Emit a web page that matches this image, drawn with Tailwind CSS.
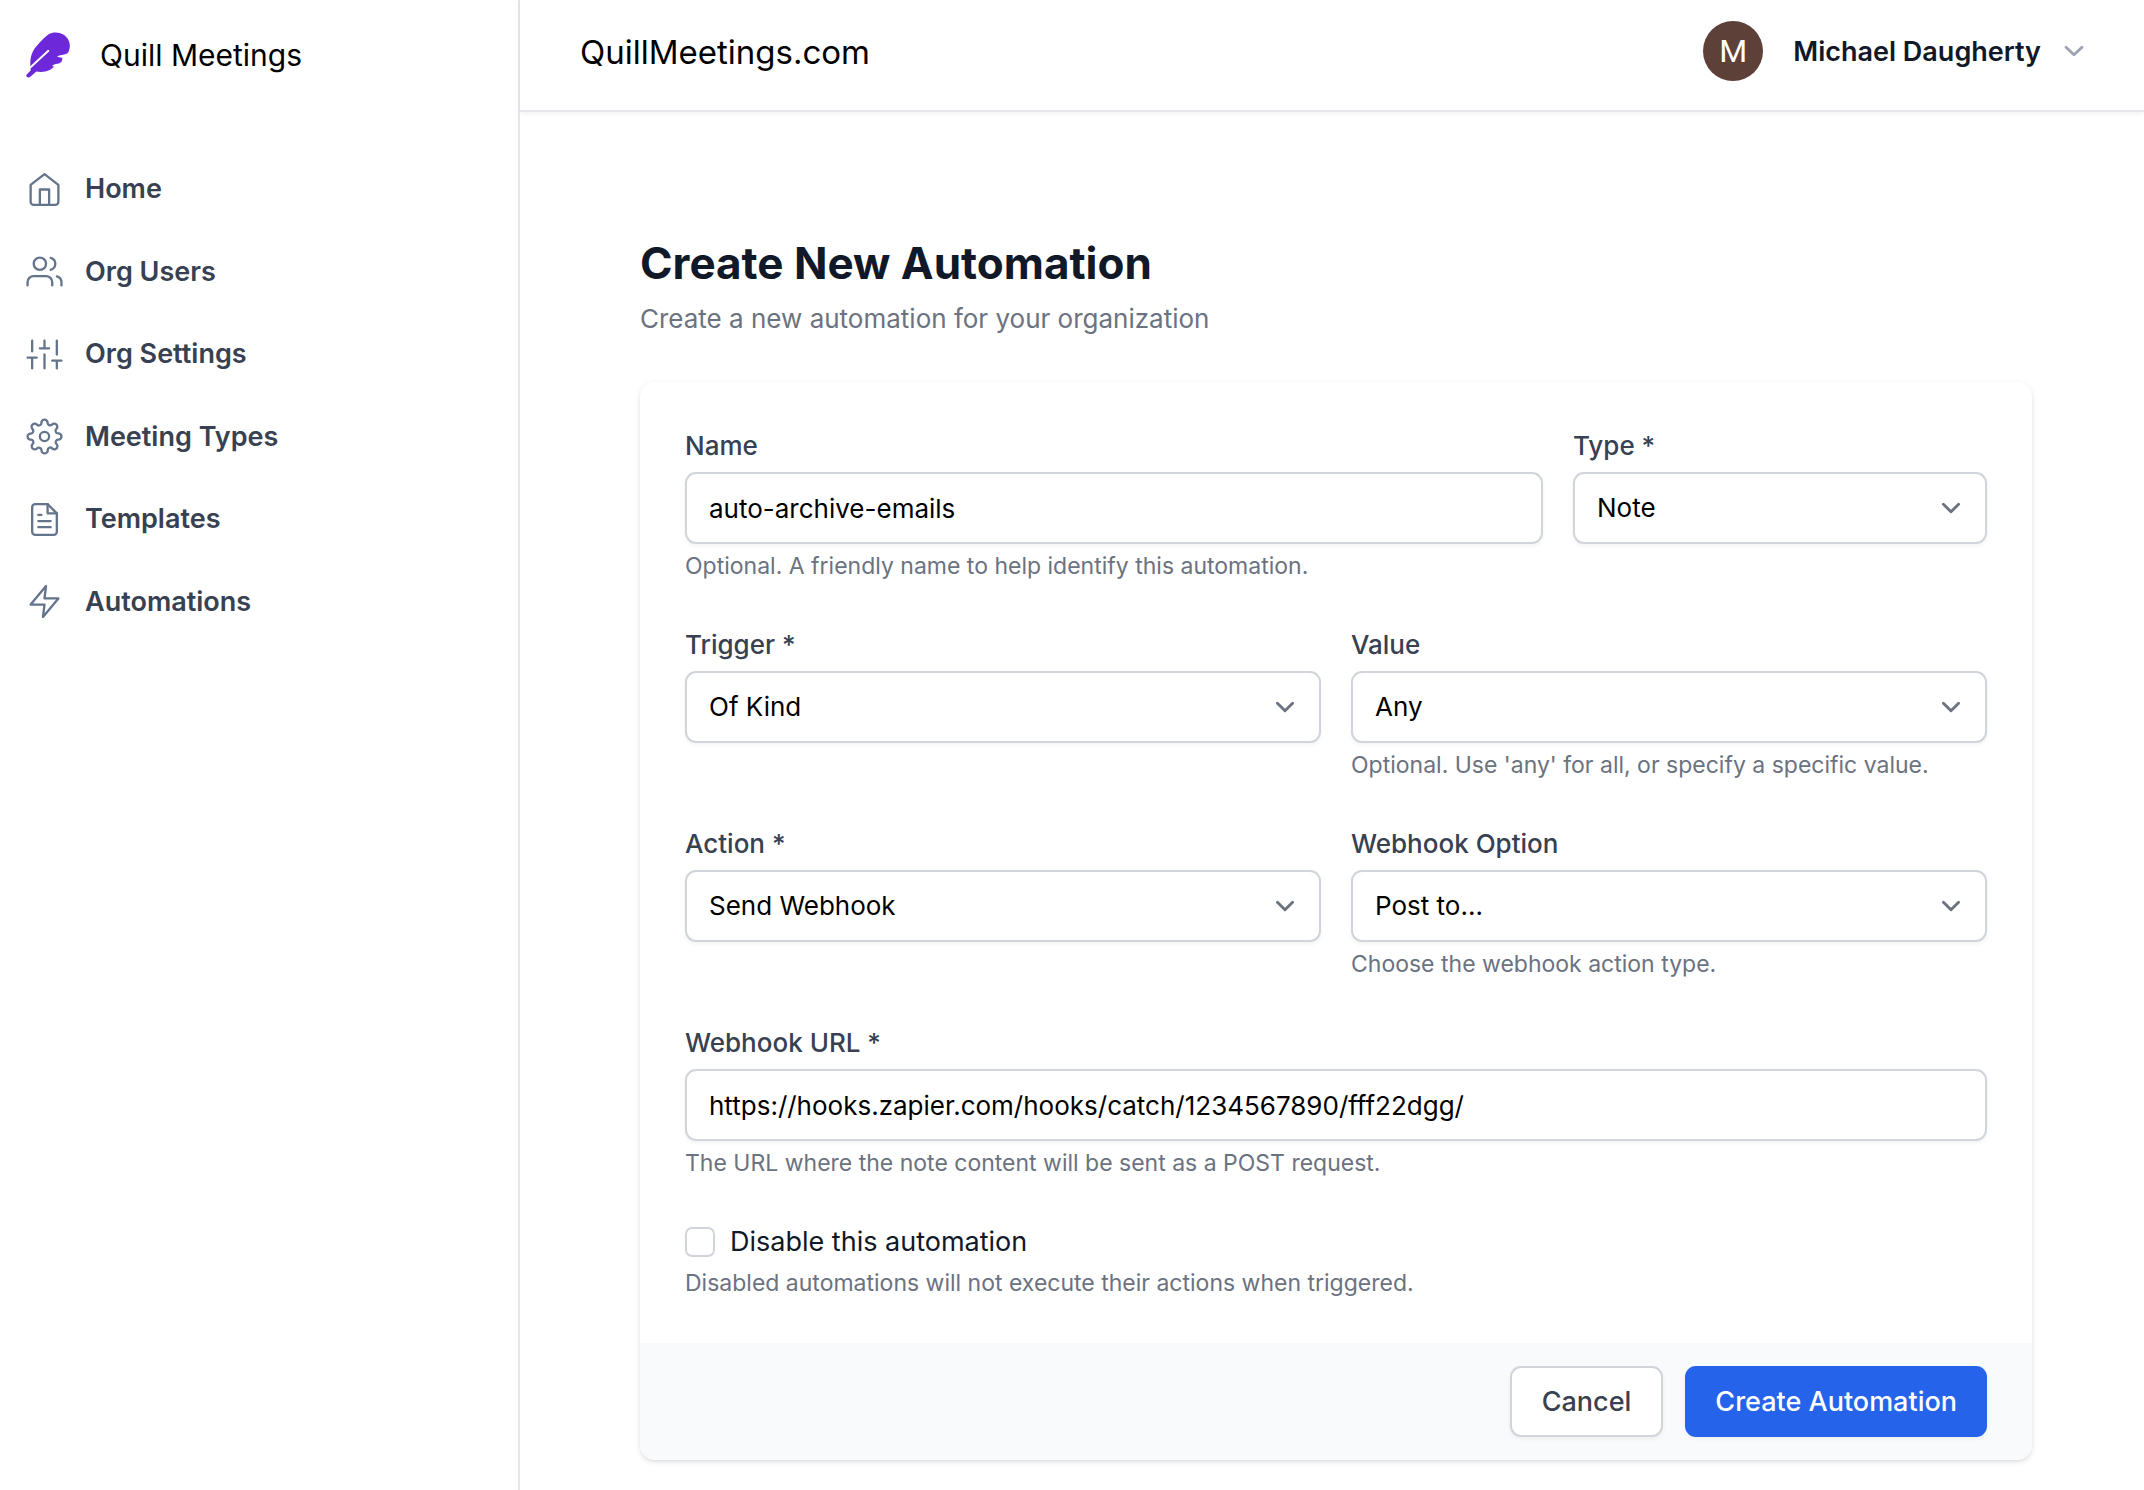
<!DOCTYPE html>
<html lang="en">
<head>
<meta charset="utf-8">
<meta name="viewport" content="width=device-width, initial-scale=1">
<title>Create New Automation - Quill Meetings</title>
<script src="https://cdn.jsdelivr.net/npm/@tailwindcss/browser@4"></script>
</head>
<body class="flex min-h-screen bg-white font-['Inter',sans-serif] text-[26px] leading-[38px] text-black">

<aside class="w-[520px] shrink-0 border-r-2 border-[#e5e7eb]">
  <a href="#" class="flex h-[110px] items-center gap-[30px] pl-[26px] text-[30px]">
    <svg class="h-[46px] w-[44px]" viewBox="48 35 132 137" aria-hidden="true">
      <path fill="#6d28d9" d="M61 134C60 110 66 91 82 74C95 60 106 47 116 41C128 34 148 34 160 42C176 52 184 71 177 90C175 96 173 99 169 100C160 103 150 104 141 107Q145 111 156 112Q158 114 156 120C154 126 150 128 146 129Q138 130 127 134Q128 137 132 139C126 146 116 151 106 153C95 155 86 154 79 153L61 169C54 175 46 168 50 162L62 150Z"/>
      <path stroke="#fff" stroke-width="6" stroke-linecap="round" fill="none" d="M57 142L62 140L115 91"/>
    </svg>
    <span>Quill Meetings</span>
  </a>
  <nav class="mt-[38px] grid h-[495px] auto-rows-fr text-[27px] font-semibold text-[#374151]">
    <a href="#" class="flex items-center gap-[22px] pl-[26px]">
      <svg class="size-[37px] text-[#64748b]" viewBox="0 0 24 24" fill="none" stroke="currentColor" stroke-width="1.5" stroke-linecap="round" stroke-linejoin="round" aria-hidden="true"><path d="M3 9l9-7 9 7v11a2 2 0 0 1-2 2H5a2 2 0 0 1-2-2z"/><path d="M9 22V12h6v10"/></svg>
      Home
    </a>
    <a href="#" class="flex items-center gap-[22px] pl-[26px]">
      <svg class="size-[37px] text-[#64748b]" viewBox="0 0 24 24" fill="none" stroke="currentColor" stroke-width="1.5" stroke-linecap="round" stroke-linejoin="round" aria-hidden="true"><path d="M17 21v-2a4 4 0 0 0-4-4H5a4 4 0 0 0-4 4v2"/><circle cx="9" cy="7" r="4"/><path d="M23 21v-2a4 4 0 0 0-3-3.87"/><path d="M16 3.13a4 4 0 0 1 0 7.75"/></svg>
      Org Users
    </a>
    <a href="#" class="flex items-center gap-[22px] pl-[26px]">
      <svg class="size-[37px] text-[#64748b]" viewBox="0 0 24 24" fill="none" stroke="currentColor" stroke-width="1.5" stroke-linecap="round" stroke-linejoin="round" aria-hidden="true"><path d="M4 21v-7M4 10V3M12 21v-9M12 8V3M20 21v-5M20 12V3M1 14h6M9 8h6M17 16h6"/></svg>
      Org Settings
    </a>
    <a href="#" class="flex items-center gap-[22px] pl-[26px]">
      <svg class="size-[37px] text-[#64748b]" viewBox="0 0 24 24" fill="none" stroke="currentColor" stroke-width="1.5" stroke-linecap="round" stroke-linejoin="round" aria-hidden="true"><circle cx="12" cy="12" r="3"/><path d="M19.4 15a1.65 1.65 0 0 0 .33 1.82l.06.06a2 2 0 0 1 0 2.83 2 2 0 0 1-2.83 0l-.06-.06a1.65 1.65 0 0 0-1.82-.33 1.65 1.65 0 0 0-1 1.51V21a2 2 0 0 1-2 2 2 2 0 0 1-2-2v-.09A1.65 1.65 0 0 0 9 19.4a1.65 1.65 0 0 0-1.82.33l-.06.06a2 2 0 0 1-2.83 0 2 2 0 0 1 0-2.83l.06-.06a1.65 1.65 0 0 0 .33-1.82 1.65 1.65 0 0 0-1.51-1H3a2 2 0 0 1-2-2 2 2 0 0 1 2-2h.09A1.65 1.65 0 0 0 4.6 9a1.65 1.65 0 0 0-.33-1.82l-.06-.06a2 2 0 0 1 0-2.83 2 2 0 0 1 2.83 0l.06.06a1.65 1.65 0 0 0 1.82.33H9a1.65 1.65 0 0 0 1-1.51V3a2 2 0 0 1 2-2 2 2 0 0 1 2 2v.09a1.65 1.65 0 0 0 1 1.51 1.65 1.65 0 0 0 1.82-.33l.06-.06a2 2 0 0 1 2.83 0 2 2 0 0 1 0 2.83l-.06.06a1.65 1.65 0 0 0-.33 1.82V9a1.65 1.65 0 0 0 1.51 1H21a2 2 0 0 1 2 2 2 2 0 0 1-2 2h-.09a1.65 1.65 0 0 0-1.51 1z"/></svg>
      Meeting Types
    </a>
    <a href="#" class="flex items-center gap-[22px] pl-[26px]">
      <svg class="size-[37px] text-[#64748b]" viewBox="0 0 24 24" fill="none" stroke="currentColor" stroke-width="1.5" stroke-linecap="round" stroke-linejoin="round" aria-hidden="true"><path d="M14 2H6a2 2 0 0 0-2 2v16a2 2 0 0 0 2 2h12a2 2 0 0 0 2-2V8z"/><path d="M14 2v6h6M16 13H8M16 17H8M10 9H8"/></svg>
      Templates
    </a>
    <a href="#" class="flex items-center gap-[22px] pl-[26px]">
      <svg class="size-[37px] text-[#64748b]" viewBox="0 0 24 24" fill="none" stroke="currentColor" stroke-width="1.5" stroke-linecap="round" stroke-linejoin="round" aria-hidden="true"><path d="M13 2L3 14h9l-1 8 10-12h-9l1-8z"/></svg>
      Automations
    </a>
  </nav>
</aside>

<div class="min-w-0 flex-1">
  <header class="flex h-[112px] items-center justify-between border-b-2 border-[#e5e7eb] pr-[51px] pb-2 pl-[60px] shadow-[0_2px_4px_rgba(0,0,0,0.05)]">
    <div class="pt-[2px] text-[33px]">QuillMeetings.com</div>
    <button type="button" class="flex items-center text-[27px] font-semibold text-[#111827]">
      <span class="flex size-[60px] items-center justify-center rounded-full bg-[#5d4037] font-['Roboto',sans-serif] text-[32px] font-normal text-white">M</span>
      <span class="ml-[30px] pt-[2px]">Michael Daugherty</span>
      <svg class="ml-[14px] size-[38px] text-[#9ca3af]" viewBox="0 0 20 20" fill="none" stroke="currentColor" stroke-width="1.5" stroke-linecap="round" stroke-linejoin="round" aria-hidden="true"><path d="M5.8 8l4.2 4 4.2-4"/></svg>
    </button>
  </header>

  <main class="pt-[123px] pr-[112px] pb-[30px] pl-[120px]">
    <h1 class="text-[44px] leading-[56px] font-bold text-[#111827]">Create New Automation</h1>
    <p class="mt-[9px] text-[#6b7280]">Create a new automation for your organization</p>

    <form class="mt-[44px] overflow-hidden rounded-[15px] bg-white shadow-[0_2px_6px_rgba(0,0,0,0.1),0_2px_4px_-2px_rgba(0,0,0,0.1)]">
      <div class="flex flex-col gap-[45px] p-[45px]">
        <div class="grid grid-cols-3 gap-[30px]">
          <div class="col-span-2">
            <label for="name" class="block font-medium text-[#374151]">Name</label>
            <input id="name" type="text" value="auto-archive-emails" class="mt-[7px] block h-[72px] w-full rounded-[11px] border-2 border-[#d1d5db] bg-white px-[22px] shadow-[0_2px_4px_rgba(0,0,0,0.05)]">
            <p class="mt-[7px] text-[23px] leading-[30px] text-[#6b7280]">Optional. A friendly name to help identify this automation.</p>
          </div>
          <div>
            <label for="type" class="block font-medium text-[#374151]">Type *</label>
            <div class="relative mt-[7px]">
              <select id="type" class="block h-[72px] w-full appearance-none rounded-[11px] border-2 border-[#d1d5db] bg-white px-[22px] shadow-[0_2px_4px_rgba(0,0,0,0.05)]"><option>Note</option></select>
              <svg class="pointer-events-none absolute inset-y-0 right-[17px] my-auto size-[38px] text-[#6b7280]" viewBox="0 0 20 20" fill="none" stroke="currentColor" stroke-width="1.5" stroke-linecap="round" stroke-linejoin="round" aria-hidden="true"><path d="M6 8l4 4 4-4"/></svg>
            </div>
          </div>
        </div>

        <div class="grid grid-cols-2 gap-[30px]">
          <div>
            <label for="trigger" class="block font-medium text-[#374151]">Trigger *</label>
            <div class="relative mt-[7px]">
              <select id="trigger" class="block h-[72px] w-full appearance-none rounded-[11px] border-2 border-[#d1d5db] bg-white px-[22px] shadow-[0_2px_4px_rgba(0,0,0,0.05)]"><option>Of Kind</option></select>
              <svg class="pointer-events-none absolute inset-y-0 right-[17px] my-auto size-[38px] text-[#6b7280]" viewBox="0 0 20 20" fill="none" stroke="currentColor" stroke-width="1.5" stroke-linecap="round" stroke-linejoin="round" aria-hidden="true"><path d="M6 8l4 4 4-4"/></svg>
            </div>
          </div>
          <div>
            <label for="value" class="block font-medium text-[#374151]">Value</label>
            <div class="relative mt-[7px]">
              <select id="value" class="block h-[72px] w-full appearance-none rounded-[11px] border-2 border-[#d1d5db] bg-white px-[22px] shadow-[0_2px_4px_rgba(0,0,0,0.05)]"><option>Any</option></select>
              <svg class="pointer-events-none absolute inset-y-0 right-[17px] my-auto size-[38px] text-[#6b7280]" viewBox="0 0 20 20" fill="none" stroke="currentColor" stroke-width="1.5" stroke-linecap="round" stroke-linejoin="round" aria-hidden="true"><path d="M6 8l4 4 4-4"/></svg>
            </div>
            <p class="mt-[7px] text-[23px] leading-[30px] text-[#6b7280]">Optional. Use 'any' for all, or specify a specific value.</p>
          </div>
        </div>

        <div class="grid grid-cols-2 gap-[30px]">
          <div>
            <label for="action" class="block font-medium text-[#374151]">Action *</label>
            <div class="relative mt-[7px]">
              <select id="action" class="block h-[72px] w-full appearance-none rounded-[11px] border-2 border-[#d1d5db] bg-white px-[22px] shadow-[0_2px_4px_rgba(0,0,0,0.05)]"><option>Send Webhook</option></select>
              <svg class="pointer-events-none absolute inset-y-0 right-[17px] my-auto size-[38px] text-[#6b7280]" viewBox="0 0 20 20" fill="none" stroke="currentColor" stroke-width="1.5" stroke-linecap="round" stroke-linejoin="round" aria-hidden="true"><path d="M6 8l4 4 4-4"/></svg>
            </div>
          </div>
          <div>
            <label for="option" class="block font-medium text-[#374151]">Webhook Option</label>
            <div class="relative mt-[7px]">
              <select id="option" class="block h-[72px] w-full appearance-none rounded-[11px] border-2 border-[#d1d5db] bg-white px-[22px] shadow-[0_2px_4px_rgba(0,0,0,0.05)]"><option>Post to...</option></select>
              <svg class="pointer-events-none absolute inset-y-0 right-[17px] my-auto size-[38px] text-[#6b7280]" viewBox="0 0 20 20" fill="none" stroke="currentColor" stroke-width="1.5" stroke-linecap="round" stroke-linejoin="round" aria-hidden="true"><path d="M6 8l4 4 4-4"/></svg>
            </div>
            <p class="mt-[7px] text-[23px] leading-[30px] text-[#6b7280]">Choose the webhook action type.</p>
          </div>
        </div>

        <div>
          <label for="url" class="block font-medium text-[#374151]">Webhook URL *</label>
          <input id="url" type="url" value="https://hooks.zapier.com/hooks/catch/1234567890/fff22dgg/" class="mt-[7px] block h-[72px] w-full rounded-[11px] border-2 border-[#d1d5db] bg-white px-[22px] shadow-[0_2px_4px_rgba(0,0,0,0.05)]">
          <p class="mt-[7px] text-[23px] leading-[30px] text-[#6b7280]">The URL where the note content will be sent as a POST request.</p>
        </div>

        <div>
          <div class="flex items-center gap-[15px]">
            <input id="disable" type="checkbox" class="size-[30px] appearance-none rounded-[7px] border-2 border-[#d1d5db] bg-white checked:bg-[#2563eb]">
            <label for="disable" class="text-[27px] text-[#111827]">Disable this automation</label>
          </div>
          <p class="mt-[7px] text-[23px] leading-[30px] text-[#6b7280]">Disabled automations will not execute their actions when triggered.</p>
        </div>
      </div>

      <div class="flex justify-end gap-[22px] bg-[#f9fafb] px-[45px] py-[23px] text-[27px] font-medium">
        <button type="button" class="h-[71px] rounded-[11px] border-2 border-[#d1d5db] bg-white px-[30px] text-[#374151] shadow-[0_2px_4px_rgba(0,0,0,0.05)]">Cancel</button>
        <button type="submit" class="h-[71px] rounded-[11px] bg-[#2563eb] px-[30px] text-white shadow-[0_2px_4px_rgba(0,0,0,0.05)]">Create Automation</button>
      </div>
    </form>
  </main>
</div>
</body>
</html>
